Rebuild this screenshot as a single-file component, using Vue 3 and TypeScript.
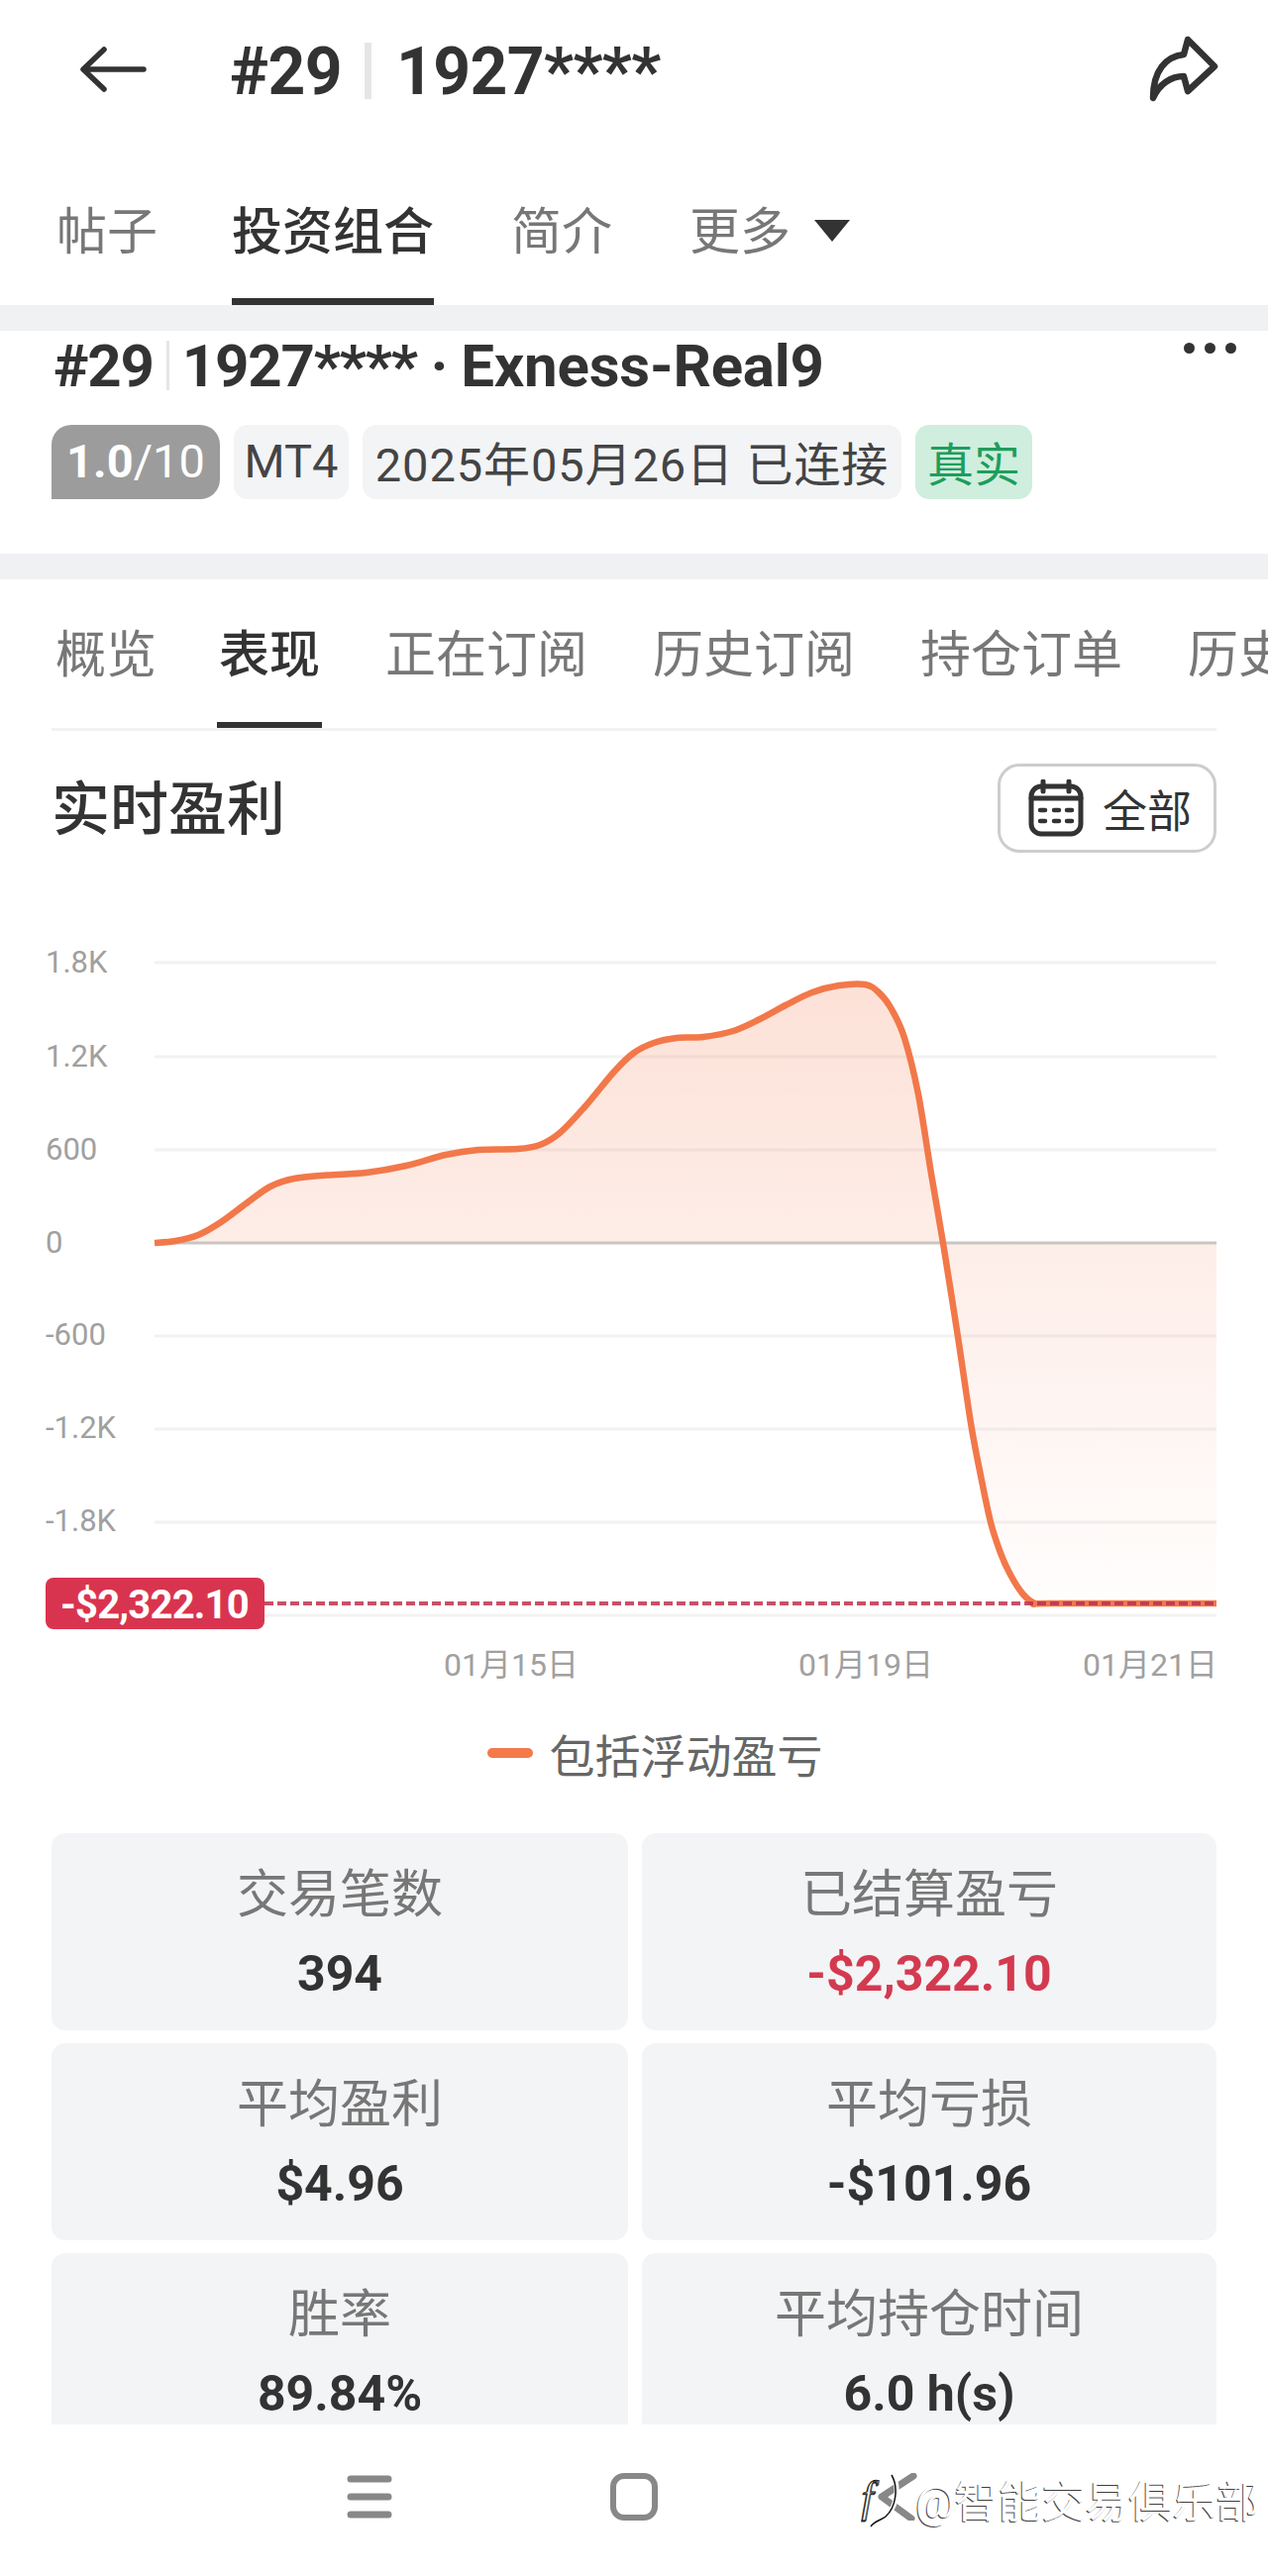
<template>
  <div class="page">
    <div class="content">
      <header class="topbar">
        <svg class="back" width="70" height="50" viewBox="0 0 70 50" fill="none">
          <path d="M66 25H6M26 5 5 25l21 20" stroke="#333" stroke-width="5.5" stroke-linecap="round" stroke-linejoin="round" />
        </svg>
        <div class="top-title">
          <span>#29</span>
          <i class="top-sep"></i>
          <span>1927****</span>
        </div>
        <svg class="share" width="76" height="70" viewBox="0 0 76 70" fill="none">
          <path d="M7 64C7 36 20 22 38 20L42 5 69 32 42 57 38 42C25 42 13 50 7 64Z" stroke="#333" stroke-width="6.5" stroke-linejoin="round" />
        </svg>
      </header>

      <nav class="main-tabs">
        <span v-for="t in mainTabs" :key="t" class="main-tab" :class="{ active: t === '投资组合' }">{{ t }}</span>
        <span class="more-arrow"></span>
      </nav>

      <div class="band"></div>

      <section class="account">
        <div class="account-title">
          <span>#29</span>
          <i class="account-sep"></i>
          <span>1927**** · </span>
          <span class="server">Exness-Real9</span>
          <span class="dots"><b></b><b></b><b></b></span>
        </div>
        <div class="chips">
          <span class="chip score"><strong>1.0</strong>/10</span>
          <span class="chip mt">MT4</span>
          <span class="chip date">2025年05月26日 已连接</span>
          <span class="chip real">真实</span>
        </div>
      </section>

      <div class="band"></div>

      <nav class="sub-tabs">
        <span v-for="t in subTabs" :key="t" class="sub-tab" :class="{ active: t === '表现' }">{{ t }}</span>
      </nav>

      <div class="profit-head">
        <h2>实时盈利</h2>
        <button class="range">
          <svg width="56" height="58" viewBox="0 0 56 58" fill="none">
            <rect x="3" y="7" width="50" height="48" rx="10" stroke="#333" stroke-width="5" />
            <path d="M3 19H53M15 2V12M41 2V12" stroke="#333" stroke-width="5" stroke-linecap="round" />
            <path d="M12 31H17M26 31H31M39 31H44M12 42H17M26 42H31M39 42H44" stroke="#333" stroke-width="4.5" stroke-linecap="round" />
          </svg>
          <span>全部</span>
        </button>
      </div>

      <svg class="chart" width="1280" height="859" viewBox="0 861 1280 859">
        <defs>
          <linearGradient id="area" gradientUnits="userSpaceOnUse" x1="0" y1="994" x2="0" y2="1619">
            <stop offset="0" stop-color="#f4764a" stop-opacity="0.22" />
            <stop offset="0.42" stop-color="#f4764a" stop-opacity="0.13" />
            <stop offset="1" stop-color="#f4764a" stop-opacity="0.01" />
          </linearGradient>
        </defs>
        <line v-for="y in gridLines" :key="y" x1="156" x2="1228" :y1="y" :y2="y" stroke="#f2f2f2" stroke-width="3" />
        <path :d="areaPath" fill="url(#area)" />
        <line x1="156" x2="1228" y1="1255" y2="1255" stroke="#c9c5c3" stroke-width="3" />
        <text v-for="l in yLabels" :key="l.text" class="axis" x="46" :y="l.y + 11">{{ l.text }}</text>
        <path :d="linePath" fill="none" stroke="#f2784a" stroke-width="6.5" stroke-linejoin="round" />
        <line x1="267" x2="1228" y1="1619" y2="1619" stroke="#c0304e" stroke-opacity="0.85" stroke-width="4" stroke-dasharray="9 4" />
        <rect x="46" y="1593" width="221" height="52" rx="8" fill="#d9344f" />
        <text class="tag" x="156" y="1634" text-anchor="middle">-$2,322.10</text>
        <text class="axis date-label" x="448" y="1692">01月15日</text>
        <text class="axis date-label" x="806" y="1692">01月19日</text>
        <text class="axis date-label" x="1229" y="1692" text-anchor="end">01月21日</text>
      </svg>

      <div class="legend">
        <i></i>
        <span>包括浮动盈亏</span>
      </div>

      <div class="stats">
        <div v-for="s in stats" :key="s.label" class="stat">
          <div class="stat-label">{{ s.label }}</div>
          <div class="stat-value" :class="{ loss: s.loss }">{{ s.value }}</div>
        </div>
      </div>
    </div>

    <footer class="navbar">
      <svg width="46" height="46" viewBox="0 0 46 46" fill="none">
        <path d="M4 5H42M4 23H42M4 41H42" stroke="#888" stroke-width="7" stroke-linecap="round" />
      </svg>
      <svg width="48" height="48" viewBox="0 0 48 48" fill="none">
        <rect x="3" y="3" width="42" height="42" rx="11" stroke="#888" stroke-width="6" />
      </svg>
      <svg width="46" height="48" viewBox="0 0 46 48" fill="none">
        <path d="M38 3 6 24l30 22" stroke="#888" stroke-width="7" stroke-linecap="round" stroke-linejoin="round" />
      </svg>
      <div class="watermark">
        <svg width="44" height="66" viewBox="0 0 44 66" fill="none">
          <path d="M33 4C40 16 38 36 27 46 22 50 16 50 12 56" stroke="#fff" stroke-width="5" />
          <path d="M33 4C40 16 38 36 27 46 22 50 16 50 12 56" stroke="#111" stroke-width="1.5" transform="translate(-1 1)" />
          <text x="2" y="42" class="wm-f">f</text>
        </svg>
        <span>@智能交易俱乐部</span>
      </div>
    </footer>
  </div>
</template>

<script setup lang="ts">
import { computed } from 'vue'

type Point = [number, number]

const mainTabs = ['帖子', '投资组合', '简介', '更多']
const subTabs = ['概览', '表现', '正在订阅', '历史订阅', '持仓订单', '历史订单']

const gridLines = [972, 1067, 1161, 1349, 1443, 1537, 1631]
const yLabels = [
  { text: '1.8K', y: 971 },
  { text: '1.2K', y: 1066 },
  { text: '600', y: 1160 },
  { text: '0', y: 1254 },
  { text: '-600', y: 1347 },
  { text: '-1.2K', y: 1441 },
  { text: '-1.8K', y: 1535 }
]

const stats = [
  { label: '交易笔数', value: '394' },
  { label: '已结算盈亏', value: '-$2,322.10', loss: true },
  { label: '平均盈利', value: '$4.96' },
  { label: '平均亏损', value: '-$101.96' },
  { label: '胜率', value: '89.84%' },
  { label: '平均持仓时间', value: '6.0 h(s)' }
]

const curve: Point[] = [
  [156, 1255], [177, 1253], [200, 1247], [223, 1234], [250, 1214], [273, 1198], [297, 1190],
  [330, 1186.5], [370, 1184], [410, 1177], [450, 1166], [483, 1161], [523, 1160], [545, 1156],
  [565, 1144], [590, 1118], [620, 1082], [640, 1063], [660, 1053], [683, 1048], [710, 1047],
  [740, 1041], [767, 1029], [793, 1015], [820, 1002], [847, 995], [873, 994], [887, 1002],
  [900, 1019], [913, 1048], [927, 1105], [940, 1185], [952, 1255], [967, 1350], [980, 1437],
  [990, 1490], [1000, 1537], [1010, 1568], [1020, 1590], [1033, 1610], [1045, 1619], [1060, 1619],
  [1228, 1619]
]

// catmull-rom through the sampled points
const linePath = computed(() => {
  let d = `M${curve[0][0]} ${curve[0][1]}`
  for (let i = 0; i < curve.length - 1; i++) {
    const p0 = curve[Math.max(i - 1, 0)]
    const p1 = curve[i]
    const p2 = curve[i + 1]
    const p3 = curve[Math.min(i + 2, curve.length - 1)]
    const c1x = p1[0] + (p2[0] - p0[0]) / 6
    const c1y = p1[1] + (p2[1] - p0[1]) / 6
    const c2x = p2[0] - (p3[0] - p1[0]) / 6
    const c2y = p2[1] - (p3[1] - p1[1]) / 6
    d += `C${c1x.toFixed(1)} ${c1y.toFixed(1)} ${c2x.toFixed(1)} ${c2y.toFixed(1)} ${p2[0]} ${p2[1]}`
  }
  return d
})

const areaPath = computed(() => `${linePath.value}L1228 1255L156 1255Z`)
</script>

<style scoped>
.page {
  width: 1280px;
  height: 2601px;
  overflow: hidden;
  background: #fff;
  color: #333;
  font-family: Roboto, "Noto Sans CJK SC", sans-serif;
}

.content {
  height: 2448px;
  overflow: hidden;
}

.topbar {
  height: 160px;
  display: flex;
  align-items: flex-start;
  box-sizing: border-box;
  padding: 0 47px 0 79px;
}

.back {
  margin-top: 45px;
}

.share {
  margin-top: 35px;
  margin-left: auto;
}

.top-title {
  margin-left: 83px;
  margin-top: 34px;
  display: flex;
  align-items: center;
  font-size: 66px;
  line-height: 78px;
  font-weight: 700;
  letter-spacing: -0.6px;
}

.top-sep {
  width: 7px;
  height: 57px;
  background: #e6e6e6;
  margin: -3px 25px 0 23px;
}

.main-tabs {
  height: 148px;
  display: flex;
  gap: 78px;
  padding-left: 57px;
}

.main-tab {
  box-sizing: border-box;
  height: 148px;
  padding-top: 39px;
  font-size: 51px;
  line-height: 72px;
  color: #777;
  border-bottom: 7px solid transparent;
}

.main-tab:first-child {
  margin-right: -3px;
}

.main-tab.active {
  color: #333;
  font-weight: 500;
  border-bottom-color: #333;
}

.more-arrow {
  margin: 62px 0 0 -54px;
  width: 0;
  height: 0;
  border-left: 18px solid transparent;
  border-right: 18px solid transparent;
  border-top: 22px solid #333;
}

.band {
  height: 26px;
  background: #f0f1f3;
}

.account {
  height: 225px;
  padding: 0 52px;
  box-sizing: border-box;
}

.account-title {
  position: relative;
  display: flex;
  align-items: center;
  height: 66px;
  padding: 2px 0 0 2px;
  box-sizing: content-box;
  font-size: 60px;
  font-weight: 700;
  letter-spacing: -1.2px;
  white-space: pre;
}

.server {
  letter-spacing: -0.2px;
}

.account-sep {
  width: 3px;
  height: 50px;
  background: #e6e6e6;
  margin: 0 13px 0 13px;
}

.dots {
  position: absolute;
  right: -20px;
  top: 12px;
  display: flex;
  gap: 10px;
}

.dots b {
  width: 11px;
  height: 11px;
  border-radius: 50%;
  background: #333;
}

.chips {
  margin-top: 27px;
  display: flex;
  gap: 14px;
}

.chip {
  height: 75px;
  display: flex;
  align-items: center;
  justify-content: center;
  box-sizing: border-box;
  padding-bottom: 3px;
  border-radius: 14px;
  background: #f3f4f6;
  font-size: 47px;
  color: #444;
  white-space: pre;
}

.chip.score {
  width: 170px;
  background: #9c9c9c;
  color: #fff;
  border-radius: 20px 20px 20px 0;
}

.chip.score strong {
  font-weight: 700;
}

.chip.mt {
  width: 116px;
}

.chip.date {
  width: 544px;
  letter-spacing: 0.9px;
}

.chip.real {
  width: 118px;
  background: #cfeede;
  color: #1f9d5c;
}

.sub-tabs {
  height: 153px;
  margin-left: 52px;
  box-sizing: border-box;
  padding: 0 0 3px 4px;
  background: linear-gradient(#f2f2f2, #f2f2f2) no-repeat left bottom / 1176px 3px;
  display: flex;
  gap: 66px;
  overflow: hidden;
}

.sub-tab {
  flex: none;
  box-sizing: border-box;
  height: 150px;
  padding: 41px 2px 0;
  margin: 0 -2px;
  font-size: 51px;
  line-height: 72px;
  color: #777;
  border-bottom: 6px solid transparent;
}

.sub-tab:first-child {
  margin-right: -5px;
}

.sub-tab.active {
  color: #333;
  font-weight: 500;
  border-bottom-color: #333;
}

.profit-head {
  margin-top: 33px;
  height: 90px;
  padding: 0 52px;
  display: flex;
  align-items: center;
  justify-content: space-between;
}

.profit-head h2 {
  margin: 0 0 8px;
  font-size: 59px;
  font-weight: 500;
}

.range {
  width: 221px;
  height: 90px;
  box-sizing: border-box;
  border: 3px solid #cdcdcd;
  border-radius: 22px;
  background: #fff;
  display: flex;
  align-items: center;
  gap: 19px;
  padding: 0 0 0 28px;
  font-family: inherit;
  font-size: 45px;
  color: #333;
}

.chart {
  display: block;
}

.axis {
  font-size: 31px;
  fill: #a0a0a0;
}

.date-label {
  font-size: 32px;
}

.tag {
  font-size: 40px;
  font-weight: 700;
  letter-spacing: -0.8px;
  fill: #fff;
}

.legend {
  height: 106px;
  box-sizing: border-box;
  padding: 0 0 6px 42px;
  display: flex;
  align-items: center;
  justify-content: center;
  gap: 17px;
  font-size: 46px;
  color: #666;
}

.legend i {
  width: 46px;
  height: 10px;
  border-radius: 5px;
  background: #f4794b;
}

.stats {
  margin: 25px 52px 0;
  display: grid;
  grid-template-columns: 582px 580px;
  gap: 13px 14px;
}

.stat {
  height: 199px;
  box-sizing: border-box;
  padding-top: 29px;
  border-radius: 14px;
  background: #f3f4f6;
  text-align: center;
}

.stat-label {
  font-size: 52px;
  line-height: 68px;
  color: #777;
}

.stat-value {
  margin-top: 11px;
  font-size: 50px;
  line-height: 68px;
  font-weight: 700;
  color: #333;
}

.stat-value.loss {
  color: #d33a50;
}

.navbar {
  position: relative;
  height: 153px;
  box-sizing: border-box;
  padding-bottom: 7px;
  display: flex;
  align-items: center;
  justify-content: center;
  gap: 220px;
}

.watermark {
  position: absolute;
  left: 868px;
  top: 46px;
  display: flex;
  align-items: center;
  gap: 12px;
  font-size: 44px;
  line-height: 66px;
  color: #fff;
  text-shadow: -1px 1px 0 rgba(0, 0, 0, 0.75);
  white-space: nowrap;
}

.wm-f {
  font-family: "Liberation Serif", serif;
  font-style: italic;
  font-size: 44px;
  fill: #fff;
  stroke: #111;
  stroke-width: 0.8px;
}
</style>

<style>
html, body {
  margin: 0;
  background: #fff;
}
</style>
